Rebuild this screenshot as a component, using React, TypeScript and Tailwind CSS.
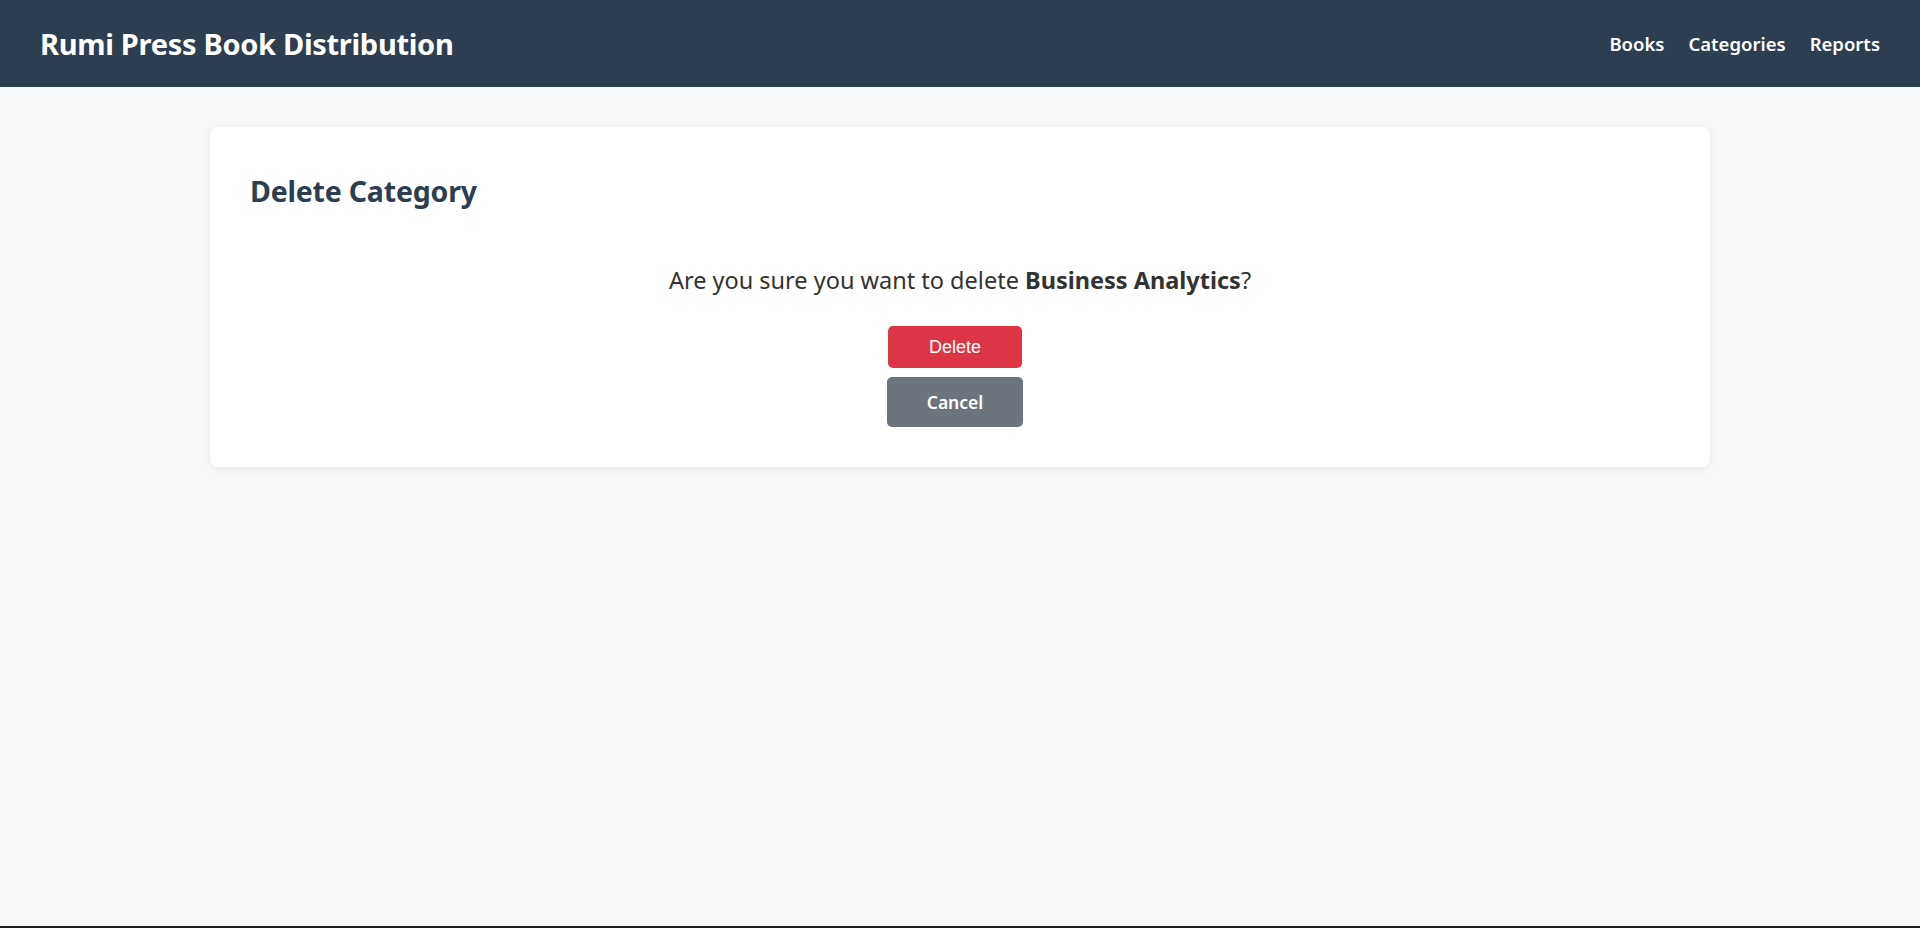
import React from "react";

const sans = "font-['Noto_Sans','Open_Sans',sans-serif]";

function Header() {
  return (
    <header className="h-[87px] bg-[#2c3e50] flex items-center justify-between px-10 text-white">
      <h1 className="text-[29px] font-bold tracking-[-0.3px]">Rumi Press Book Distribution</h1>
      <nav className="flex items-center gap-[24px] text-[18.5px] font-semibold">
        <a href="#">Books</a>
        <a href="#">Categories</a>
        <a href="#">Reports</a>
      </nav>
    </header>
  );
}

export default function App() {
  return (
    <div className={`${sans} h-[928px] bg-[#f8f9fa] border-b-2 border-[#1e1e1e] flex flex-col`}>
      <Header />
      <main className="px-[210px] pt-10">
        <div className="bg-white rounded-lg shadow-[0_2px_8px_rgba(0,0,0,0.08)] p-10">
          <h2 className="mt-[5px] text-[28.5px] font-bold text-[#2c3e50] leading-[39px] tracking-[-0.2px]">Delete Category</h2>
          <div className="flex flex-col items-center mt-[53px]">
            <p className="text-[23.5px] text-[#333] leading-[32px]">
              Are you sure you want to delete <strong className="font-bold">Business Analytics</strong>?
            </p>
            <button className="mt-[30px] mr-[10px] w-[134px] h-[42px] rounded-[5px] bg-[#dc3545] text-white text-[18px] font-['Liberation_Sans',Arial,sans-serif]">
              Delete
            </button>
            <a
              href="#"
              className="mt-[9px] mr-[10px] w-[136px] h-[50px] rounded-[5px] bg-[#6c757d] text-white text-[17.5px] font-semibold flex items-center justify-center"
            >
              Cancel
            </a>
          </div>
        </div>
      </main>
    </div>
  );
}
